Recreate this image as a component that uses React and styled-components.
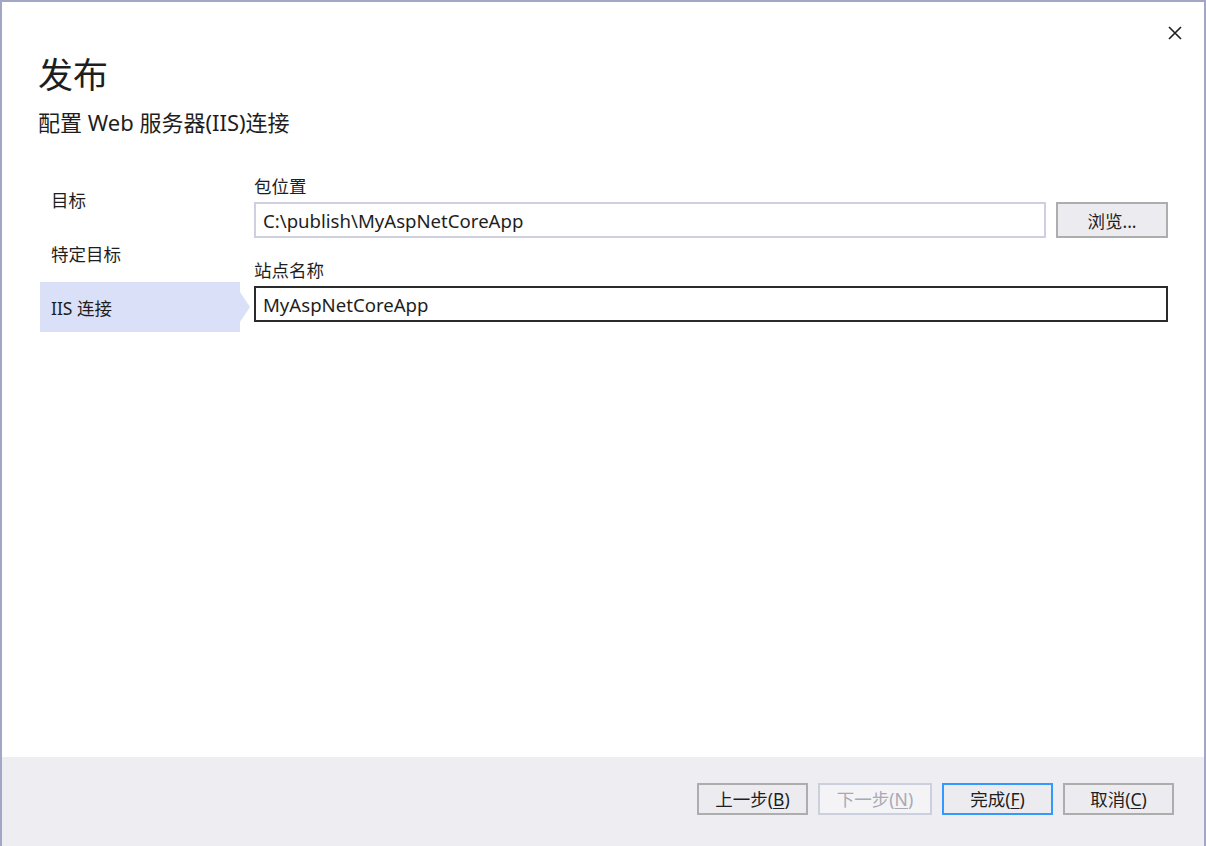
import React from 'react';
import styled, { createGlobalStyle, css } from 'styled-components';

const FONT = `"Segoe UI", "Noto Sans", "Noto Sans CJK SC", sans-serif`;

const GlobalStyle = createGlobalStyle`
  html, body {
    margin: 0;
    padding: 0;
    background: #ffffff;
  }
  #root {
    height: 846px;
  }
  * {
    box-sizing: border-box;
  }
`;

const Window = styled.div`
  height: 846px;
  display: flex;
  flex-direction: column;
  background: #ffffff;
  border: 2px solid #a3a6c6;
  border-bottom: none;
  font-family: ${FONT};
  color: #1e1e1e;
`;

const TitleBar = styled.div`
  height: 50px;
  display: flex;
  justify-content: flex-end;
  align-items: flex-start;
  padding: 24px 22px 0 0;
`;

const CloseButton = styled.button`
  width: 14px;
  height: 14px;
  padding: 0;
  border: none;
  background: transparent;
  cursor: pointer;
  display: flex;
`;

const Header = styled.div`
  padding: 0 0 0 36px;
`;

const Title = styled.h1`
  margin: 0;
  font-size: 35px;
  font-weight: 400;
  line-height: 46px;
`;

const Subtitle = styled.h2`
  margin: 10px 0 0;
  font-size: 22px;
  font-weight: 400;
  line-height: 29px;
`;

const Body = styled.div`
  flex: 1;
  display: flex;
  padding: 37px 36px 0 38px;
`;

const Sidebar = styled.nav`
  width: 200px;
  display: flex;
  flex-direction: column;
  gap: 4px;
`;

const NavItem = styled.div`
  position: relative;
  height: 50px;
  display: flex;
  align-items: center;
  padding-left: 11px;
  font-size: 17.5px;
  ${(p) =>
    p.$active &&
    css`
      background: #dae0f8;
      &::after {
        content: '';
        position: absolute;
        right: -10px;
        top: 50%;
        margin-top: -15px;
        border-style: solid;
        border-width: 15px 0 15px 10px;
        border-color: transparent transparent transparent #dae0f8;
      }
    `}
`;

const Content = styled.div`
  flex: 1;
  margin-left: 14px;
`;

const Label = styled.label`
  display: block;
  font-size: 17.5px;
  line-height: 24px;
  margin-top: ${(p) => p.$top || 0}px;
  margin-bottom: 4px;
`;

const FieldRow = styled.div`
  display: flex;
  gap: 10px;
`;

const TextInput = styled.div`
  flex: 1;
  height: 36px;
  display: flex;
  align-items: center;
  padding-left: 7px;
  font-size: 18.6px;
  border: 2px solid ${(p) => (p.$focused ? '#2b2b2b' : '#cfd0df')};
  background: #ffffff;
`;

const Button = styled.button`
  width: ${(p) => p.$width || 111}px;
  height: ${(p) => p.$height || 32}px;
  font-family: ${FONT};
  font-size: 17.5px;
  color: #1e1e1e;
  background: #ececf0;
  border: 2px solid #adadad;
  padding: 0;
  cursor: pointer;
  ${(p) =>
    p.$primary &&
    css`
      border-color: #3399ff;
    `}
  ${(p) =>
    p.disabled &&
    css`
      color: #a8a9b4;
      background: #f4f4f6;
      border-color: #ccd0de;
      cursor: default;
    `}
  u {
    text-underline-offset: 2px;
  }
`;

const Footer = styled.div`
  height: 89px;
  background: #eeeef2;
  display: flex;
  justify-content: flex-end;
  align-items: center;
  gap: 10px;
  padding: 0 30px 6px 0;
`;

const App = () => (
  <>
    <GlobalStyle />
    <Window>
      <TitleBar>
        <CloseButton aria-label="关闭">
          <svg width="14" height="14" viewBox="0 0 14 14">
            <path d="M1 1 L13 13 M13 1 L1 13" stroke="#1e1e1e" strokeWidth="1.6" />
          </svg>
        </CloseButton>
      </TitleBar>
      <Header>
        <Title>发布</Title>
        <Subtitle>配置 Web 服务器(IIS)连接</Subtitle>
      </Header>
      <Body>
        <Sidebar>
          <NavItem>目标</NavItem>
          <NavItem>特定目标</NavItem>
          <NavItem $active>IIS 连接</NavItem>
        </Sidebar>
        <Content>
          <Label>包位置</Label>
          <FieldRow>
            <TextInput>C:\publish\MyAspNetCoreApp</TextInput>
            <Button $width={112} $height={36}>浏览...</Button>
          </FieldRow>
          <Label $top={20}>站点名称</Label>
          <FieldRow>
            <TextInput $focused>MyAspNetCoreApp</TextInput>
          </FieldRow>
        </Content>
      </Body>
      <Footer>
        <Button>上一步(<u>B</u>)</Button>
        <Button disabled $width={114}>下一步(<u>N</u>)</Button>
        <Button $primary>完成(<u>F</u>)</Button>
        <Button>取消(<u>C</u>)</Button>
      </Footer>
    </Window>
  </>
);

export default App;
